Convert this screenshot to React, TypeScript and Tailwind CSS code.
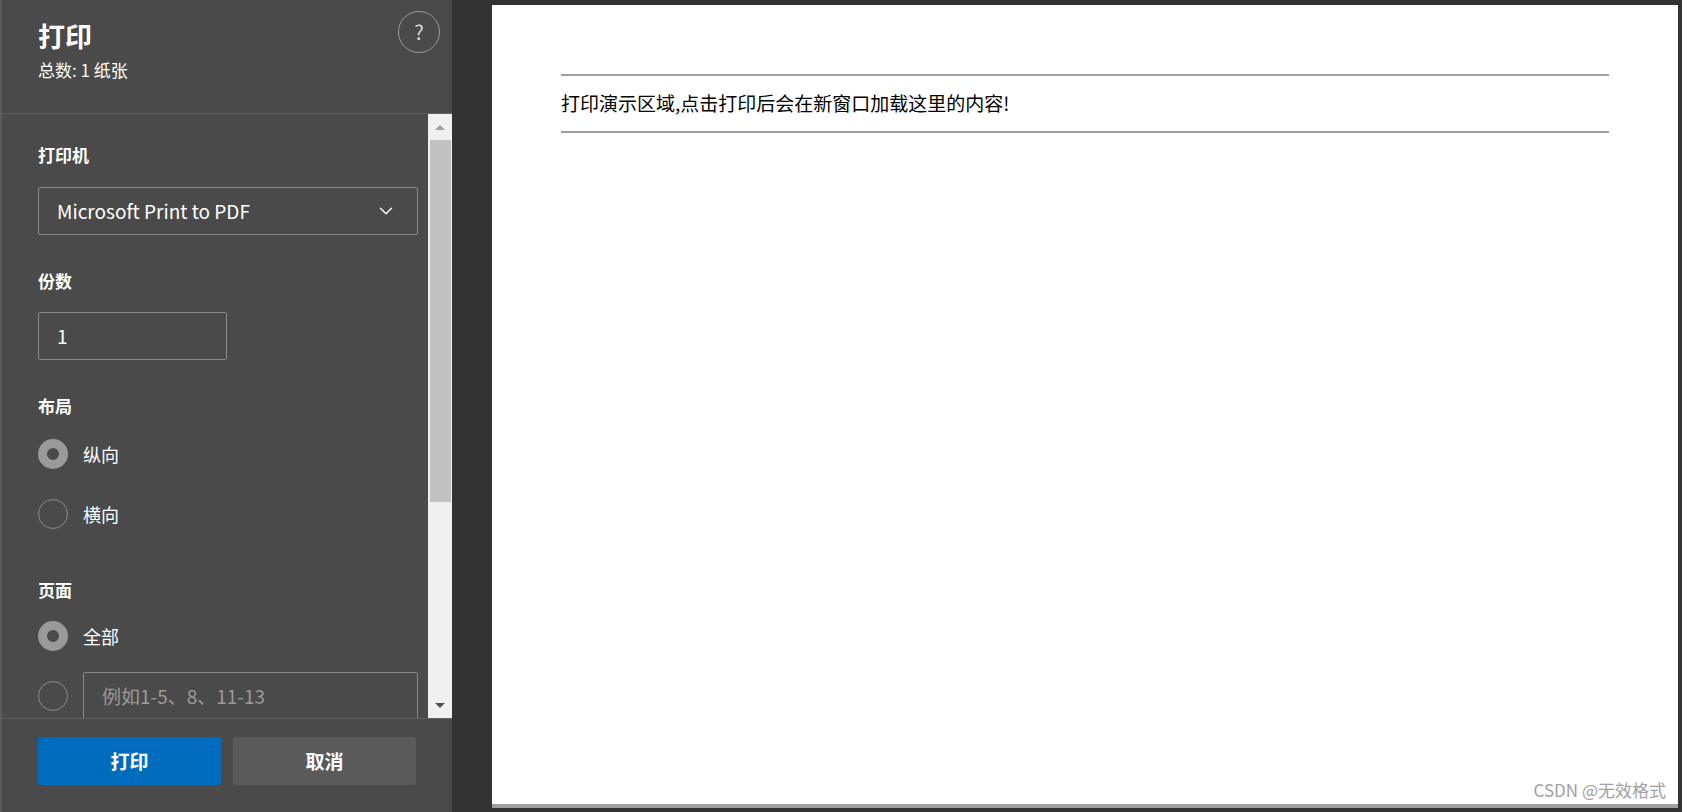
import { ChevronDown } from 'lucide-react';

const font = { fontFamily: '"Noto Sans CJK SC", "Noto Sans", sans-serif' };

function Radio({ checked, label }: { checked?: boolean; label: string }) {
  return (
    <div className="flex items-center gap-[15px] h-[30px]">
      {checked ? (
        <span className="w-[30px] h-[30px] rounded-full border-[9px] border-[#9a9a9a] bg-[#4a4a4a]" />
      ) : (
        <span className="w-[30px] h-[30px] rounded-full border border-[#8a8a8a]" />
      )}
      <span className="text-[18px] text-white">{label}</span>
    </div>
  );
}

export default function App() {
  return (
    <div className="w-[1682px] h-[812px] flex bg-[#333333] overflow-hidden" style={font}>
      <div className="w-[452px] h-full flex flex-col bg-[#4a4a4a] border-l-2 border-[#5a5a5a]">
        <div className="h-[114px] shrink-0 border-b border-[#5f5f5f] px-[36px] pt-[16px] relative">
          <div className="text-[27px] font-bold text-white leading-[40px]">打印</div>
          <div className="text-[17px] text-white leading-[24px] mt-[2px]">总数: 1 纸张</div>
          <div className="absolute right-[12px] top-[11px] w-[42px] h-[42px] rounded-full border border-[#9a9a9a] flex items-center justify-center text-[20px] text-[#dddddd]">?</div>
        </div>
        <div className="flex-1 flex min-h-0">
          <div className="flex-1 overflow-hidden pl-[36px] pr-[10px] pt-[28px]">
            <div className="text-[17px] font-bold text-white leading-[26px]">打印机</div>
            <div className="mt-[19px] h-[48px] border border-[#8a8a8a] rounded-[2px] flex items-center justify-between pl-[18px] pr-[20px]">
              <span className="text-[19px] text-white">Microsoft Print to PDF</span>
              <ChevronDown className="w-[22px] h-[22px] text-white" strokeWidth={1.5} />
            </div>
            <div className="mt-[33px] text-[17px] font-bold text-white leading-[26px]">份数</div>
            <div className="mt-[18px] w-[189px] h-[48px] border border-[#8a8a8a] rounded-[2px] flex items-center pl-[18px] text-[19px] text-white">1</div>
            <div className="mt-[33px] text-[17px] font-bold text-white leading-[26px]">布局</div>
            <div className="mt-[20px] flex flex-col gap-[30px]">
              <Radio checked label="纵向" />
              <Radio label="横向" />
            </div>
            <div className="mt-[48px] text-[17px] font-bold text-white leading-[26px]">页面</div>
            <div className="mt-[18px]">
              <Radio checked label="全部" />
            </div>
            <div className="mt-[21px] flex items-center gap-[15px]">
              <span className="w-[30px] h-[30px] rounded-full border border-[#8a8a8a] shrink-0" />
              <div className="flex-1 h-[48px] border border-[#8a8a8a] rounded-[2px] flex items-center pl-[18px] text-[19px] text-[#9a9a9a]">例如1-5、8、11-13</div>
            </div>
          </div>
          <div className="w-[24px] bg-[#f0f0f0] flex flex-col items-center">
            <div className="h-[26px] flex items-center justify-center">
              <div className="w-0 h-0 border-l-[5px] border-r-[5px] border-b-[5px] border-l-transparent border-r-transparent border-b-[#a0a0a0]" />
            </div>
            <div className="w-[21px] h-[362px] bg-[#c1c1c1]" />
            <div className="flex-1" />
            <div className="h-[26px] flex items-center justify-center">
              <div className="w-0 h-0 border-l-[5px] border-r-[5px] border-t-[5px] border-l-transparent border-r-transparent border-t-[#505050]" />
            </div>
          </div>
        </div>
        <div className="h-[94px] shrink-0 border-t border-[#5f5f5f] px-[36px] pt-[18px] flex gap-[12px]">
          <button className="w-[183px] h-[48px] bg-[#006cbe] rounded-[2px] text-[19px] font-bold text-white">打印</button>
          <button className="w-[183px] h-[48px] bg-[#5a5a5a] rounded-[2px] text-[19px] font-bold text-white">取消</button>
        </div>
      </div>
      <div className="w-[40px] bg-[#333333]" />
      <div className="flex-1 pt-[5px] pr-[4px] pb-[4px] bg-[#333333]">
        <div className="h-full bg-white relative px-[69px] pt-[69px] border-b-4 border-[#a0a0a0]">
          <div className="border-t-2 border-b-2 border-[#a0a0a0] h-[59px] flex items-center">
            <span className="text-[19px] text-black">打印演示区域,点击打印后会在新窗口加载这里的内容!</span>
          </div>
          <div className="absolute right-[12px] bottom-[2px] text-[17px] text-[#a0a0a0]">CSDN @无效格式</div>
        </div>
      </div>
    </div>
  );
}
